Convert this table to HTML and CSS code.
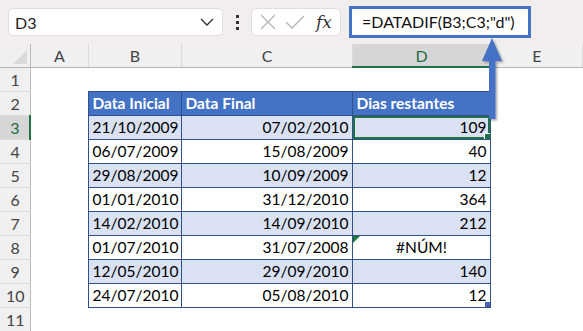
FILE: index.html
```html
<!DOCTYPE html>
<html lang="pt">
<head>
  <meta charset="UTF-8">
  <title>DATADIF</title>
  <link rel="stylesheet" href="styles.css">
</head>
<body>
  <div class="formula-bar">
    <div class="name-box">
      <span>D3</span>
      <svg class="chevron" width="14" height="8" viewBox="0 0 14 8"><path d="M1 1l6 6 6-6" fill="none" stroke="#333" stroke-width="1.4"/></svg>
    </div>
    <div class="dots"><i></i><i></i><i></i></div>
    <div class="fx-buttons">
      <svg width="20" height="20" viewBox="0 0 20 20"><path d="M3 3l14 14M17 3L3 17" stroke="#b5b5b5" stroke-width="1.3"/></svg>
      <svg width="22" height="20" viewBox="0 0 22 20"><path d="M2 10l6 6L20 4" fill="none" stroke="#b5b5b5" stroke-width="1.3"/></svg>
      <span class="fx">fx</span>
    </div>
    <div class="formula">=DATADIF(B3;C3;"d")</div>
  </div>

  <table class="sheet">
    <colgroup>
      <col class="c-row"><col class="c-a"><col class="c-b"><col class="c-c"><col class="c-d"><col>
    </colgroup>
    <tr class="col-heads">
      <th class="corner"></th><th>A</th><th>B</th><th>C</th><th class="active">D</th><th>E</th>
    </tr>
    <tr><th>1</th><td></td><td></td><td></td><td></td><td></td></tr>
    <tr>
      <th>2</th><td></td>
      <td class="t-head">Data Inicial</td><td class="t-head">Data Final</td><td class="t-head">Dias restantes</td><td></td>
    </tr>
    <tr class="band">
      <th class="active">3</th><td></td>
      <td class="t">21/10/2009</td><td class="t num">07/02/2010</td><td class="t num selected">109<span class="handle"></span></td><td></td>
    </tr>
    <tr>
      <th>4</th><td></td>
      <td class="t">06/07/2009</td><td class="t num">15/08/2009</td><td class="t num">40</td><td></td>
    </tr>
    <tr class="band">
      <th>5</th><td></td>
      <td class="t">29/08/2009</td><td class="t num">10/09/2009</td><td class="t num">12</td><td></td>
    </tr>
    <tr>
      <th>6</th><td></td>
      <td class="t">01/01/2010</td><td class="t num">31/12/2010</td><td class="t num">364</td><td></td>
    </tr>
    <tr class="band">
      <th>7</th><td></td>
      <td class="t">14/02/2010</td><td class="t num">14/09/2010</td><td class="t num">212</td><td></td>
    </tr>
    <tr>
      <th>8</th><td></td>
      <td class="t">01/07/2010</td><td class="t num">31/07/2008</td><td class="t err"><span class="flag"></span>#NÚM!</td><td></td>
    </tr>
    <tr class="band">
      <th>9</th><td></td>
      <td class="t">12/05/2010</td><td class="t num">29/09/2010</td><td class="t num">140</td><td></td>
    </tr>
    <tr>
      <th>10</th><td></td>
      <td class="t">24/07/2010</td><td class="t num">05/08/2010</td><td class="t num last">12<span class="resize"></span></td><td></td>
    </tr>
    <tr><th>11</th><td></td><td></td><td></td><td></td><td></td></tr>
  </table>

  <!-- arrow from D3 up to the formula -->
  <svg class="arrow" width="30" height="90" viewBox="0 0 30 90">
    <defs>
      <filter id="sh" x="-50%" y="-20%" width="200%" height="140%">
        <feDropShadow dx="1.5" dy="1.5" stdDeviation="1.2" flood-color="#000" flood-opacity="0.35"/>
      </filter>
    </defs>
    <path d="M15 1L25 24H18.5V82H12V24H5Z" fill="#4472c4" filter="url(#sh)"/>
  </svg>
</body>
</html>
```
FILE: styles.css
```css
body {
  margin: 0;
  width: 583px;
  height: 331px;
  overflow: hidden;
  background: #fff;
  font-family: Lato, "Open Sans", sans-serif;
  position: relative;
}

/* top bar */
.formula-bar {
  height: 44px;
  background: #f2eeee;
  display: flex;
  align-items: center;
  padding: 0 0 0 8px;
  box-sizing: border-box;
}
.name-box {
  width: 215px;
  height: 28px;
  background: #fff;
  border: 1px solid #e2dede;
  border-radius: 5px;
  box-sizing: border-box;
  display: flex;
  align-items: center;
  justify-content: space-between;
  padding: 0 8px 0 6px;
  font-size: 16px;
  color: #222;
}
.dots {
  width: 28px;
  display: flex;
  flex-direction: column;
  align-items: center;
  gap: 3px;
}
.dots i {
  width: 3px;
  height: 3px;
  background: #333;
  display: block;
}
.fx-buttons {
  width: 90px;
  height: 28px;
  background: #fff;
  border: 1px solid #e2dede;
  border-radius: 5px;
  box-sizing: border-box;
  display: flex;
  align-items: center;
  gap: 6px;
  padding: 0 4px 0 6px;
}
.fx {
  font-family: "DejaVu Serif", "Liberation Serif", serif;
  font-style: italic;
  font-size: 17px;
  color: #333;
  margin-left: 4px;
}
.formula {
  margin-left: 8px;
  width: 182px;
  height: 32px;
  border: 3px solid #4472c4;
  box-sizing: border-box;
  background: #fff;
  font-size: 16px;
  line-height: 26px;
  padding-left: 10px;
  color: #111;
}

/* grid */
.sheet {
  border-collapse: collapse;
  table-layout: fixed;
  width: 583px;
}
.c-row { width: 30px; }
.c-a { width: 58px; }
.c-b { width: 93px; }
.c-c { width: 171px; }
.c-d { width: 138px; }

.sheet th,
.sheet td {
  padding: 0 3px 0 4px;
  height: 24px;
  font-size: 15.5px;
  white-space: nowrap;
  overflow: hidden;
  box-sizing: border-box;
}
.sheet th {
  background: #f0f0f0;
  color: #444;
  font-weight: normal;
  text-align: center;
  font-size: 16px;
  border-bottom: 1px solid #dcdcdc;
  border-right: 1px solid #bcbcbc;
}
.col-heads th {
  height: 23px;
  border-right: 1px solid #dcdcdc;
  border-bottom: 1px solid #b4b4b4;
}
.col-heads th.corner {
  border-right: 1px solid #bcbcbc;
  position: relative;
}
.corner::after {
  content: "";
  position: absolute;
  right: 3px;
  bottom: 3px;
  border-left: 14px solid transparent;
  border-bottom: 14px solid #dadada;
}
.sheet th.active {
  background: #d6d6d6;
  color: #1e6e40;
}
.col-heads th.active {
  border-bottom: 2px solid #217346;
}
tr > th.active:first-child {
  border-right: 2px solid #217346;
}

/* table data */
.t-head {
  background: #4472c4;
  color: #fff;
  font-weight: bold;
  border: 1px solid #2f528f;
}
.t {
  border: 1px solid #2f528f;
  color: #000;
}
.band .t { background: #d9e1f2; }
.num { text-align: right; }
.err {
  text-align: center;
  position: relative;
}
.flag {
  position: absolute;
  left: 0;
  top: 0;
  border-top: 7px solid #1e7b34;
  border-right: 7px solid transparent;
}
.selected {
  position: relative;
  box-shadow: inset 0 0 0 2px #217346;
}
.handle {
  position: absolute;
  right: -1px;
  bottom: -1px;
  width: 5px;
  height: 5px;
  background: #217346;
  border: 1px solid #fff;
}
.last { position: relative; }
.resize {
  position: absolute;
  right: 0;
  bottom: 0;
  width: 5px;
  height: 5px;
  background: #4a5fb8;
}

.arrow {
  position: absolute;
  left: 477px;
  top: 37px;
}
```
